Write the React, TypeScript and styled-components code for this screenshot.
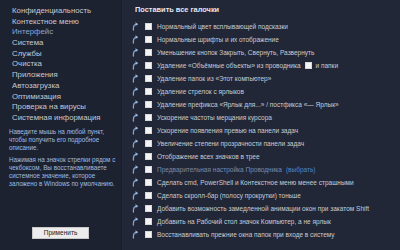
import React from "react";
import styled, { createGlobalStyle } from "styled-components";

const Global = createGlobalStyle`
  html, body { margin: 0; padding: 0; background: #212737; }
  #root { width: 400px; height: 250px; overflow: hidden; }
  * { box-sizing: border-box; }
`;

const Window = styled.div`
  display: flex;
  width: 400px;
  height: 250px;
  background: #212737;
  font-family: "Liberation Sans", Arial, sans-serif;
`;

const Sidebar = styled.aside`
  width: 122px;
  flex: none;
  display: flex;
  flex-direction: column;
  background: #1d2231;
  border-right: 1px solid #1a1e2b;
  padding: 6px 0 11px 0;
`;

const NavList = styled.ul`
  list-style: none;
  margin: 0;
  padding: 0 0 0 12px;
`;

const NavItem = styled.li<{ $active?: boolean }>`
  font-size: 7.8px;
  line-height: 10.7px;
  height: 10.7px;
  color: ${(p) => (p.$active ? "#8aa6d4" : "#c4c9d3")};
  white-space: nowrap;
`;

const Help = styled.div`
  margin-top: 4px;
  padding: 0 3px 0 9px;
  display: flex;
  flex-direction: column;
  gap: 4.4px;
`;

const HelpPara = styled.p`
  margin: 0;
  font-size: 6.3px;
  line-height: 8px;
  color: #9dbde2;
`;

const ApplyButton = styled.button`
  margin: auto auto 0 auto;
  width: 57px;
  height: 12px;
  padding: 0;
  border: 1px solid #c9c9c9;
  background: #ececec;
  color: #222;
  font-family: "Liberation Sans", Arial, sans-serif;
  font-size: 6.5px;
  line-height: 10px;
`;

const Main = styled.main`
  flex: 1;
  display: flex;
  flex-direction: column;
  padding: 5px 0 0 10px;
`;

const Header = styled.div`
  font-size: 7.4px;
  font-weight: bold;
  color: #e3e6ed;
  line-height: 9px;
  height: 9px;
  padding-left: 3px;
  margin-bottom: 5.5px;
`;

const Row = styled.div`
  display: flex;
  align-items: center;
  height: 13px;
  white-space: nowrap;
`;

const ArrowWrap = styled.span`
  width: 6px;
  height: 9px;
  display: inline-flex;
  margin-right: 7px;
`;

const Box = styled.span<{ $inline?: boolean }>`
  display: inline-block;
  width: 7px;
  height: 7px;
  background: #f4f4f4;
  border: 1px solid #d8d8d8;
  margin: ${(p) => (p.$inline ? "0 4px 0 4px" : "0 5px 0 0")};
  flex: none;
`;

const Label = styled.span<{ $dim?: boolean }>`
  font-size: 6.5px;
  color: ${(p) => (p.$dim ? "#7a8aa8" : "#c8ccd5")};
  display: inline-flex;
  align-items: center;
`;

const Link = styled.span`
  color: #4f86c6;
  margin-left: 4px;
`;

const Arrow = () => (
  <ArrowWrap>
    <svg width="6" height="9" viewBox="0 0 6 9">
      <path d="M5 2.2 C2.4 2.2 1 4.2 1.4 8" fill="none" stroke="#7fa6d4" strokeWidth="1.3" strokeLinecap="round" />
      <path d="M3.6 0.6 L5.6 2.2 L3.6 3.6" fill="#9fc0e6" stroke="#9fc0e6" strokeWidth="0.6" />
    </svg>
  </ArrowWrap>
);

const nav = [
  "Конфиденциальность",
  "Контекстное меню",
  "Интерфейс",
  "Система",
  "Службы",
  "Очистка",
  "Приложения",
  "Автозагрузка",
  "Оптимизация",
  "Проверка на вирусы",
  "Системная информация",
];

type Item = { text: React.ReactNode; dim?: boolean };

const items: Item[] = [
  { text: "Нормальный цвет всплывающей подсказки" },
  { text: "Нормальные шрифты и их отображение" },
  { text: "Уменьшение кнопок Закрыть, Свернуть, Развернуть" },
  {
    text: (
      <>
        Удаление «Объёмные объекты» из проводника
        <Box $inline />
        и папки
      </>
    ),
  },
  { text: "Удаление папок из «Этот компьютер»" },
  { text: "Удаление стрелок с ярлыков" },
  { text: "Удаление префикса «Ярлык для...» / постфикса «— Ярлык»" },
  { text: "Ускорение частоты мерцания курсора" },
  { text: "Ускорение появления превью на панели задач" },
  { text: "Увеличение степени прозрачности панели задач" },
  { text: "Отображение всех значков в трее" },
  {
    text: (
      <>
        Предварительная настройка Проводника
        <Link>(выбрать)</Link>
      </>
    ),
    dim: true,
  },
  { text: "Сделать cmd, PowerShell и Контекстное меню менее страшными" },
  { text: "Сделать скролл-бар (полосу прокрутки) тоньше" },
  { text: "Добавить возможность замедленной анимации окон при закатом Shift" },
  { text: "Добавить на Рабочий стол значок Компьютер, а не ярлык" },
  { text: "Восстанавливать прежние окна папок при входе в систему" },
];

export default function App() {
  return (
    <>
      <Global />
      <Window>
        <Sidebar>
          <NavList>
            {nav.map((n) => (
              <NavItem key={n} $active={n === "Интерфейс"}>
                {n}
              </NavItem>
            ))}
          </NavList>
          <Help>
            <HelpPara>
              Наведите мышь на любой пункт, чтобы получить его подробное описание.
            </HelpPara>
            <HelpPara>
              Нажимая на значок стрелки рядом с чекбоксом, Вы восстанавливаете системное значение, которое заложено в Windows по умолчанию.
            </HelpPara>
          </Help>
          <ApplyButton>Применить</ApplyButton>
        </Sidebar>
        <Main>
          <Header>Поставить все галочки</Header>
          {items.map((it, i) => (
            <Row key={i}>
              <Arrow />
              <Box />
              <Label $dim={it.dim}>{it.text}</Label>
            </Row>
          ))}
        </Main>
      </Window>
    </>
  );
}
